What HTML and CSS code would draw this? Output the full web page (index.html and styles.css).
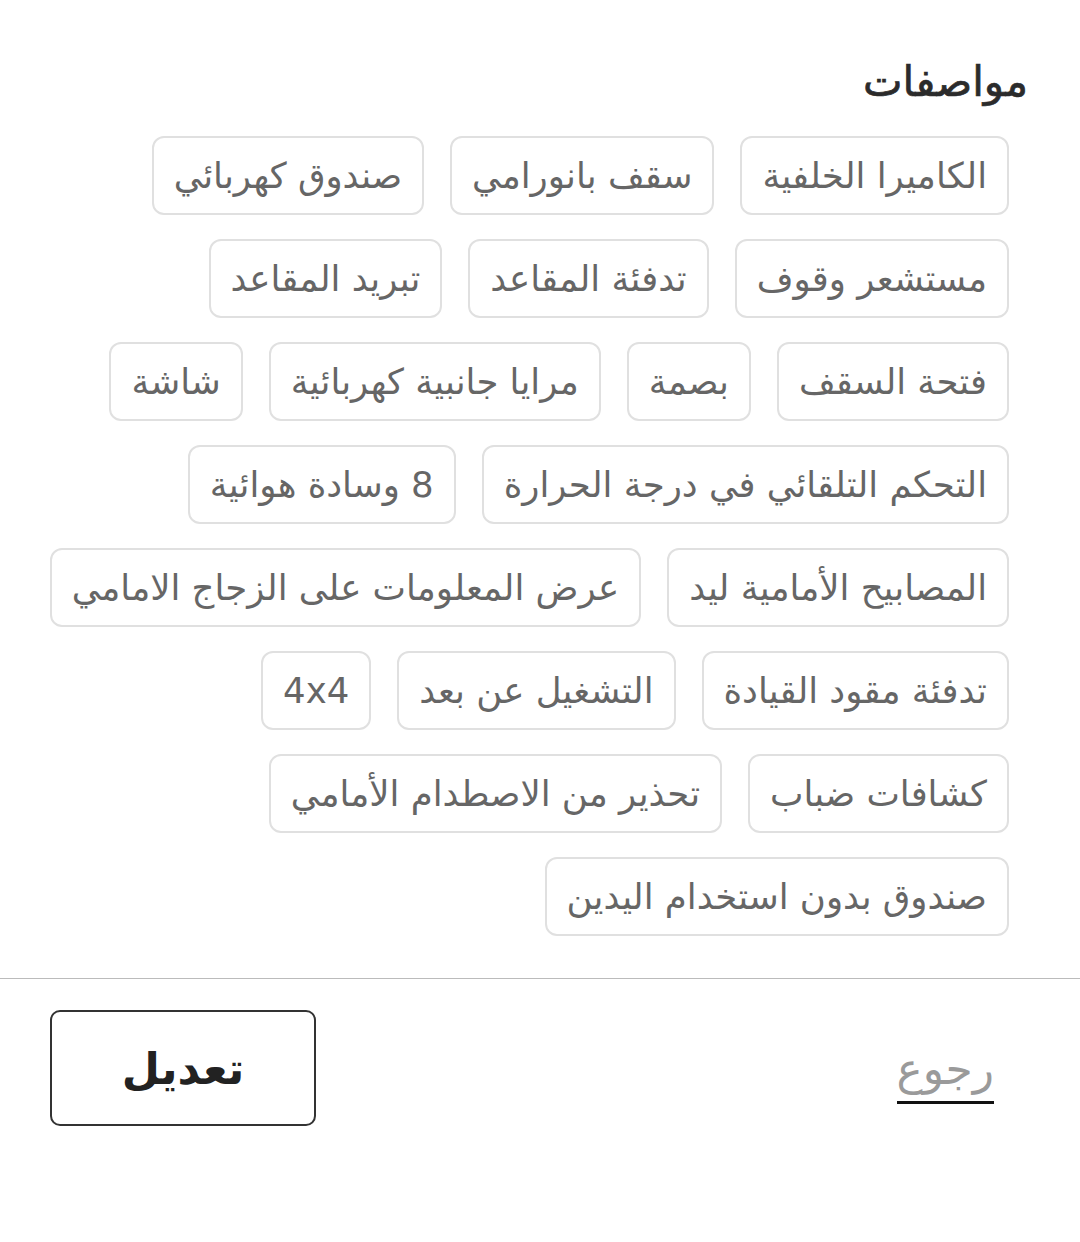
FILE: index.html
```html
<!DOCTYPE html>
<html lang="ar" dir="rtl">
<head>
<meta charset="utf-8">
<link rel="stylesheet" href="styles.css">
</head>
<body>
<div class="page">
  <h1 class="title">مواصفات</h1>
  <div class="chips">
    <div class="row">
      <span class="chip">الكاميرا الخلفية</span>
      <span class="chip">سقف بانورامي</span>
      <span class="chip">صندوق كهربائي</span>
    </div>
    <div class="row">
      <span class="chip">مستشعر وقوف</span>
      <span class="chip">تدفئة المقاعد</span>
      <span class="chip">تبريد المقاعد</span>
    </div>
    <div class="row">
      <span class="chip">فتحة السقف</span>
      <span class="chip">بصمة</span>
      <span class="chip">مرايا جانبية كهربائية</span>
      <span class="chip">شاشة</span>
    </div>
    <div class="row">
      <span class="chip">التحكم التلقائي في درجة الحرارة</span>
      <span class="chip">8 وسادة هوائية</span>
    </div>
    <div class="row">
      <span class="chip">المصابيح الأمامية ليد</span>
      <span class="chip">عرض المعلومات على الزجاج الامامي</span>
    </div>
    <div class="row">
      <span class="chip">تدفئة مقود القيادة</span>
      <span class="chip">التشغيل عن بعد</span>
      <span class="chip">4x4</span>
    </div>
    <div class="row">
      <span class="chip">كشافات ضباب</span>
      <span class="chip">تحذير من الاصطدام الأمامي</span>
    </div>
    <div class="row">
      <span class="chip">صندوق بدون استخدام اليدين</span>
    </div>
  </div>
</div>
<div class="footer">
  <a class="back">رجوع</a>
  <button class="edit">تعديل</button>
</div>
</body>
</html>
```
FILE: styles.css
```css
html, body {
  margin: 0;
  padding: 0;
  background: #fff;
}
body {
  font-family: "DejaVu Sans", "Noto Sans", sans-serif;
  width: 1080px;
}
.page {
  padding: 55px 0 0 0;
  border-bottom: 1px solid #bbb;
}
.title {
  margin: 0 52px 28px 0;
  font-size: 42px;
  font-weight: normal;
  -webkit-text-stroke: 0.7px #2b2b2b;
  color: #2b2b2b;
  line-height: 53px;
}
.chips {
  display: flex;
  flex-direction: column;
  gap: 24px;
  padding: 0 71px 42px 50px;
}
.row {
  display: flex;
  gap: 26px;
}
.chip {
  display: inline-flex;
  align-items: center;
  height: 79px;
  box-sizing: border-box;
  padding: 0 20px;
  border: 2px solid #e0e0e0;
  border-radius: 12px;
  font-size: 35.5px;
  color: #666;
  white-space: nowrap;
}
.footer {
  display: flex;
  justify-content: space-between;
  align-items: center;
  padding: 31px 86px 0 50px;
}
.back {
  display: inline-block;
  font-size: 44px;
  line-height: 56px;
  color: #9a9a9a;
  padding-bottom: 4px;
  border-bottom: 3px solid #111;
  margin-top: 8px;
}
.edit {
  width: 266px;
  height: 116px;
  border: 2px solid #333;
  border-radius: 10px;
  background: #fff;
  font-family: inherit;
  font-size: 44px;
  font-weight: bold;
  color: #222;
}
```
